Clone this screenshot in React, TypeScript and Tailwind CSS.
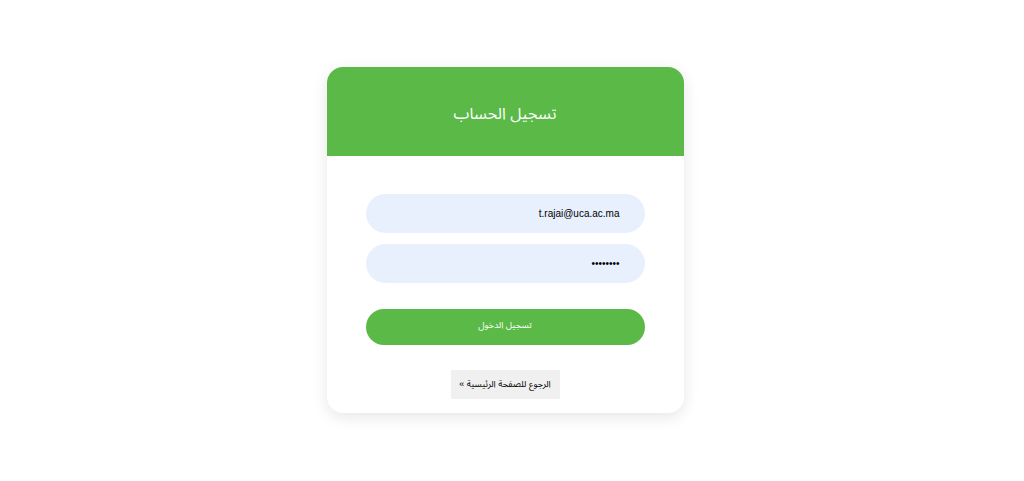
export default function App() {
  return (
    <div
      className="min-h-screen bg-white flex justify-center pt-[67px] pr-[14px]"
      style={{ fontFamily: '"Liberation Sans", "Noto Sans Arabic", "DejaVu Sans", Arial, sans-serif' }}
      dir="rtl"
    >
      <div className="w-[357px] h-[346px] bg-white rounded-2xl shadow-[0_4px_16px_rgba(0,0,0,0.1)] overflow-hidden flex flex-col">
        {/* Header */}
        <div className="h-[89px] bg-[#5ab947] flex items-center justify-center pt-[5px]">
          <h1 className="text-white text-[16px] font-normal">تسجيل الحساب</h1>
        </div>

        {/* Form */}
        <div className="flex flex-col px-[39px] pt-[38px]">
          <input
            type="email"
            defaultValue="t.rajai@uca.ac.ma"
            dir="rtl"
            className="h-[39px] w-full rounded-full bg-[#e8f0fe] px-[25px] text-[10px] text-black outline-none"
          />
          <input
            type="password"
            defaultValue="12345678"
            dir="rtl"
            className="mt-[11px] h-[39px] w-full rounded-full bg-[#e8f0fe] px-[25px] text-[10px] text-black outline-none"
          />
          <button className="mt-[26px] h-[36px] w-full rounded-full bg-[#5ab947] text-white text-[9px] pb-[2px]">
            تسجيل الدخول
          </button>
          <div className="mt-[25px] flex justify-center">
            <a className="h-[29px] w-[109px] bg-[#f0f0f0] flex items-center justify-center whitespace-nowrap text-[9px] text-black">
              الرجوع للصفحة الرئيسية »
            </a>
          </div>
        </div>
      </div>
    </div>
  );
}
